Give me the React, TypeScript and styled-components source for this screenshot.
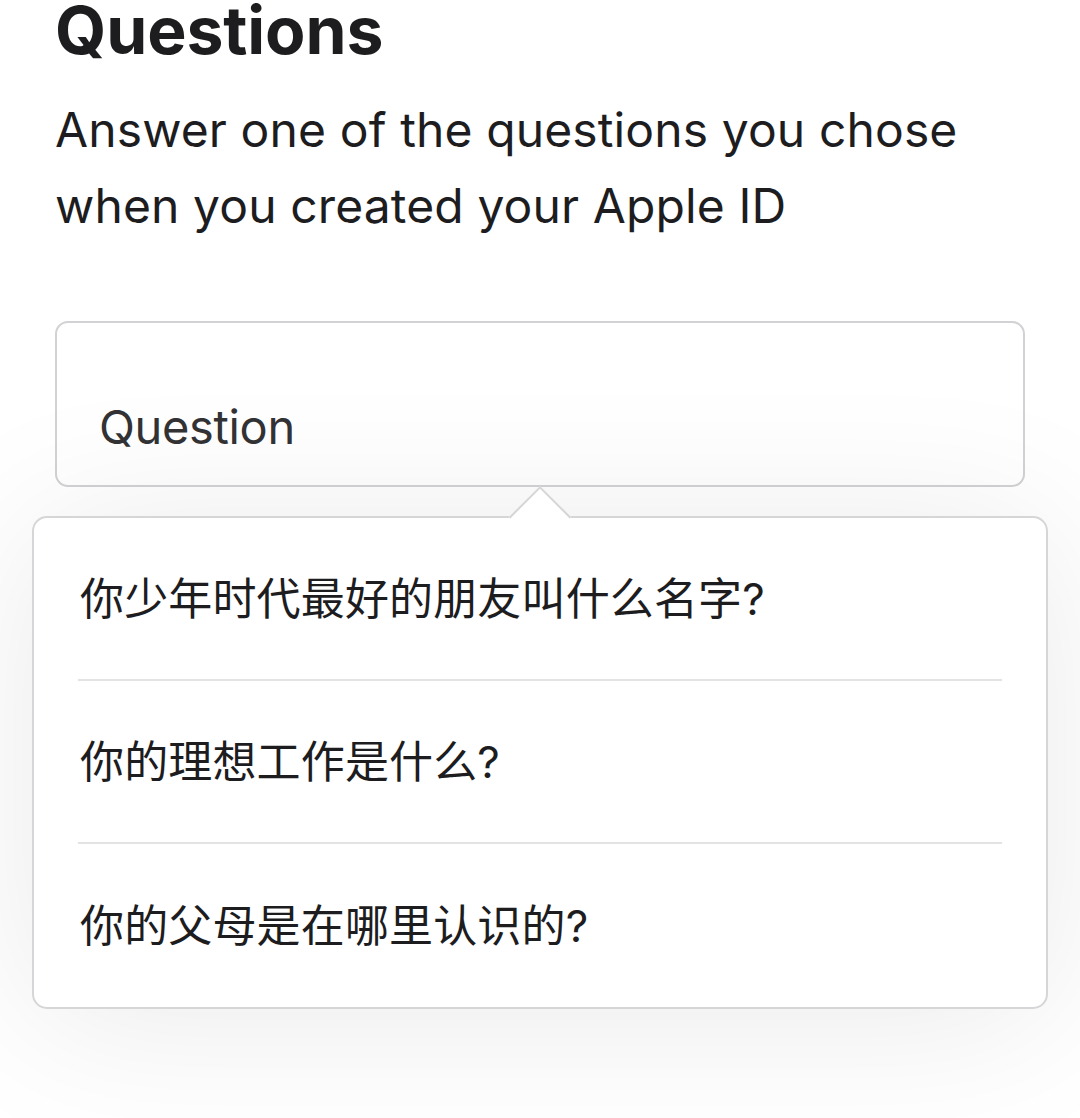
import React from "react";
import styled, { createGlobalStyle } from "styled-components";

const Global = createGlobalStyle`
  html, body { margin: 0; padding: 0; background: #ffffff; }
  body {
    font-family: Inter, "Noto Sans CJK SC", "Noto Sans", sans-serif;
    color: #1d1d1f;
    -webkit-font-smoothing: antialiased;
  }
`;

const Page = styled.main`
  width: 1080px;
  height: 1118px;
  overflow: hidden;
  padding: 0 55px;
  box-sizing: border-box;
`;

const Title = styled.h1`
  margin: 0;
  font-size: 66px;
  line-height: 60px;
  font-weight: 700;
  letter-spacing: -0.1px;
  color: #1d1d1f;
`;

const Subtitle = styled.p`
  margin: 32px 0 0;
  font-size: 48px;
  line-height: 76px;
  font-weight: 400;
  letter-spacing: 0.12px;
  color: #1d1d1f;
`;

const Field = styled.div`
  position: relative;
  margin-top: 77px;
`;

const SelectBox = styled.div`
  height: 166px;
  box-sizing: border-box;
  border: 2.5px solid #d2d2d4;
  border-radius: 13px;
  background: #ffffff;
  padding: 0 42px 20px;
  display: flex;
  align-items: flex-end;
`;

const SelectLabel = styled.span`
  font-size: 47px;
  line-height: 76px;
  color: #333336;
  letter-spacing: -0.35px;
`;

const Menu = styled.ul`
  position: absolute;
  top: 195px;
  left: -23px;
  right: -23px;
  margin: 0;
  padding: 0 44px;
  list-style: none;
  background: #ffffff;
  border: 2.5px solid #d6d6d8;
  border-radius: 15px;
  box-shadow: 0 10px 160px rgba(0, 0, 0, 0.085);
  z-index: 2;

  &::before {
    content: "";
    position: absolute;
    top: -23px;
    left: 50%;
    width: 44px;
    height: 44px;
    margin-left: -22px;
    background: #ffffff;
    border-top: 2.5px solid #d6d6d8;
    border-left: 2.5px solid #d6d6d8;
    box-sizing: border-box;
    transform: rotate(45deg);
  }
`;

const MenuItem = styled.li<{ $last?: boolean }>`
  position: relative;
  height: 163px;
  display: flex;
  align-items: center;
  padding: 0 0 6px 2px;
  font-size: 44px;
  letter-spacing: 0.15px;
  color: #1d1d1f;
  border-bottom: ${(p) => (p.$last ? "none" : "2.5px solid #e3e3e5")};
  box-sizing: border-box;
`;

const questions = [
  "你少年时代最好的朋友叫什么名字?",
  "你的理想工作是什么?",
  "你的父母是在哪里认识的?",
];

export default function App() {
  return (
    <>
      <Global />
      <Page>
        <Title>Questions</Title>
        <Subtitle>
          Answer one of the questions you chose
          <br />
          when you created your Apple ID
        </Subtitle>
        <Field>
          <SelectBox>
            <SelectLabel>Question</SelectLabel>
          </SelectBox>
          <Menu>
            {questions.map((q, i) => (
              <MenuItem key={q} $last={i === questions.length - 1}>
                {q}
              </MenuItem>
            ))}
          </Menu>
        </Field>
      </Page>
    </>
  );
}
